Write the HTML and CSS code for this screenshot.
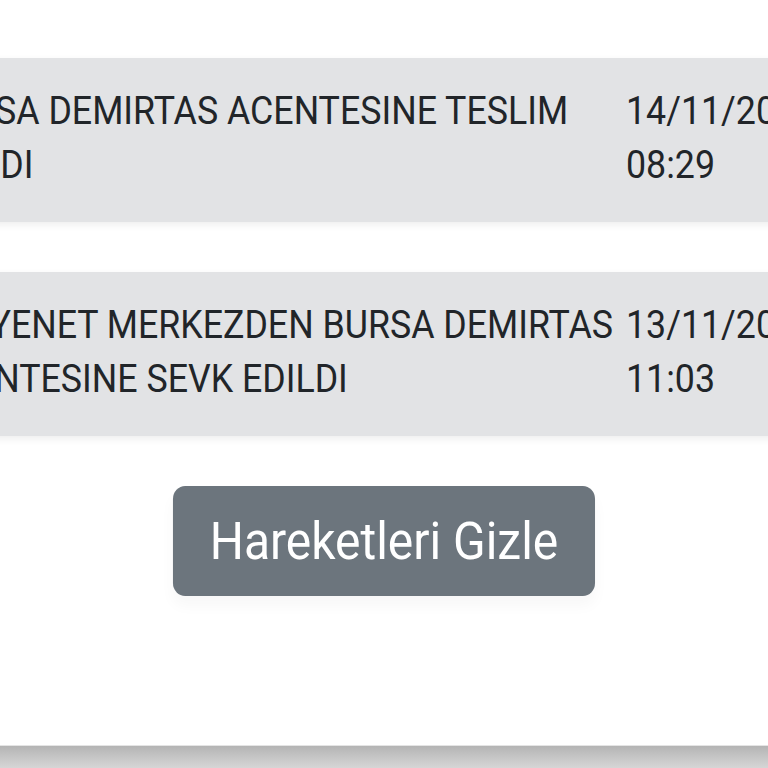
FILE: index.html
```html
<!DOCTYPE html>
<html lang="tr">
    <head>
        <meta charset="UTF-8">
        <title>Kargo Takip</title>
        <link rel="stylesheet" href="styles.css">
    </head>
    <body>
        <div class="screen">
            <div class="moves">
                <div class="move">
                    <div class="move_desc">BURSA DEMIRTAS ACENTESINE TESLIM EDILDI</div>
                    <div class="move_date">14/11/2023 08:29</div>
                </div>
                <div class="move">
                    <div class="move_desc">ESEYENET MERKEZDEN BURSA DEMIRTAS ACENTESINE SEVK EDILDI</div>
                    <div class="move_date">13/11/2023 11:03</div>
                </div>
            </div>
            <div class="actions">
                <button class="btn_toggle">Hareketleri Gizle</button>
            </div>
        </div>
        <div class="bottom_bar"></div>
    </body>
</html>
```

FILE: styles.css
```css
html, body{
    margin: 0;
    height: 100%;
    overflow: hidden;
    background-color: #ffffff;
    font-family: Roboto, "Liberation Sans", sans-serif;
    color: #212529;
}

body{
    display: flex;
    flex-direction: column;
}

/* the phone font is narrower than Roboto: squeeze the whole screen */
.screen{
    flex: 1;
    width: 817px;
    padding-top: 58px;
    transform: scaleX(0.94);
    transform-origin: left top;
}

.moves{
    display: flex;
    flex-direction: column;
    gap: 50px;
    margin-left: -77px;
    width: 1000px;
}

.move{
    display: flex;
    flex-direction: row;
    padding: 26px 0 30px 0;
    background-color: #e2e3e5;
    box-shadow: 0 3px 8px rgba(0, 0, 0, 0.07);
    font-size: 38px;
    line-height: 54px;
}

.move_desc{
    width: 739px;
    padding-right: 4px;
}

.move_date{
    width: 210px;
}

.actions{
    display: flex;
    justify-content: center;
    padding-top: 50px;
}

.btn_toggle{
    width: 449px;
    height: 110px;
    border: none;
    border-radius: 13px;
    background-color: #6c757d;
    color: #ffffff;
    font-family: Roboto, "Liberation Sans", sans-serif;
    font-size: 51px;
    box-shadow: 0 10px 14px rgba(0, 0, 0, 0.03);
}

.bottom_bar{
    height: 22px;
    border-top: 1px solid #e4e4e4;
    background: linear-gradient(#b4b4b4, #d6d6d6);
}
```
